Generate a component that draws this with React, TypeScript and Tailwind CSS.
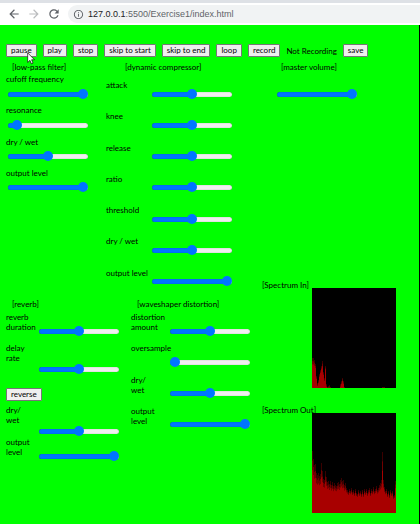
import type { CSSProperties, ReactNode } from "react";
import { MdArrowBack, MdArrowForward, MdInfoOutline, MdRefresh } from "react-icons/md";

function Slider({ id, label, value }: { id: string; label?: string; value: number }) {
  return (
    <input
      id={id}
      type="range"
      min={0}
      max={100}
      defaultValue={value}
      aria-label={label}
      style={{ "--fill": `calc(5px + (100% - 10px) * ${value / 100})` } as CSSProperties}
      className="block h-[10px] w-20 shrink-0 appearance-none bg-transparent [&::-webkit-slider-runnable-track]:h-[5px] [&::-webkit-slider-runnable-track]:rounded-full [&::-webkit-slider-runnable-track]:bg-[linear-gradient(to_right,#0075ff_var(--fill),#efefef_var(--fill))] [&::-webkit-slider-runnable-track]:shadow-[inset_0_0_1px_rgba(0,0,0,0.5)] [&::-webkit-slider-thumb]:-mt-[3px] [&::-webkit-slider-thumb]:size-[10px] [&::-webkit-slider-thumb]:appearance-none [&::-webkit-slider-thumb]:rounded-full [&::-webkit-slider-thumb]:bg-[#0075ff]"
    />
  );
}

function Button({ children }: { children: ReactNode }) {
  return (
    <button
      type="button"
      className="h-[13px] shrink-0 whitespace-nowrap rounded-[1px] border border-[#767676] bg-[#efefef] px-1 text-[8px] leading-[11px] text-black"
    >
      {children}
    </button>
  );
}

function Heading({ children }: { children: ReactNode }) {
  return <h2 className="h-3 whitespace-nowrap">{children}</h2>;
}

const filter = [
  { id: "lp-cutoff", label: "cufoff frequency", value: 100 },
  { id: "lp-resonance", label: "resonance", value: 5 },
  { id: "lp-mix", label: "dry / wet", value: 50 },
  { id: "lp-level", label: "output level", value: 100 },
];

const compressor = [
  { id: "dc-attack", label: "attack", value: 50 },
  { id: "dc-knee", label: "knee", value: 50 },
  { id: "dc-release", label: "release", value: 50 },
  { id: "dc-ratio", label: "ratio", value: 50 },
  { id: "dc-threshold", label: "threshold", value: 50 },
  { id: "dc-mix", label: "dry / wet", value: 50 },
  { id: "dc-level", label: "output level", value: 100 },
];

const distortion = [
  { id: "ws-amount", label: "distortion\namount", value: 50 },
  { id: "ws-oversample", label: "oversample", value: 0 },
  { id: "ws-mix", label: "dry/\nwet", value: 50 },
  { id: "ws-level", label: "output\nlevel", value: 100 },
];

function ReverbRow({ id, label, value, tall }: { id: string; label: string; value: number; tall?: boolean }) {
  return (
    <div className={tall ? "flex h-[31px] items-end" : "flex h-6 items-end"}>
      <label htmlFor={id} className="w-[33px] self-start whitespace-pre">
        {label}
      </label>
      <Slider id={id} value={value} />
    </div>
  );
}

const spectrumIn = [
  30, 30, 28, 24, 12, 5, 8, 14, 18, 22, 27, 16, 10, 22, 4, 1, 2, 3, 1, 0, 0, 0, 0, 0, 0, 0, 0, 0, 4, 7, 10, 7, 1, 0,
  0, 0, 0, 0, 0, 0, 0, 0, 0, 0, 0, 0, 0, 0, 0, 0, 0, 0, 0, 0, 0, 0, 0, 0, 0, 0, 0, 0, 0, 0, 0, 0, 0, 0, 0, 0, 1, 1,
  1, 0, 0, 0, 0, 0, 0, 0, 0, 0, 0, 0,
];

const spectrumOut = [
  62, 54, 48, 49, 40, 38, 40, 37, 39, 50, 42, 34, 33, 42, 36, 31, 32, 29, 32, 28, 31, 27, 30, 28, 27, 30, 31, 29, 33,
  35, 32, 33, 28, 30, 25, 23, 21, 24, 22, 25, 21, 23, 20, 24, 20, 19, 23, 20, 22, 19, 23, 19, 24, 21, 24, 20, 23, 25,
  20, 24, 22, 26, 22, 24, 27, 23, 25, 28, 30, 33, 61, 33, 26, 22, 24, 19, 22, 18, 23, 20, 22, 17, 18, 32,
];

function Spectrum({ bins, name }: { bins: number[]; name: string }) {
  return (
    <svg role="img" aria-label={name} viewBox="0 0 84 100" className="mt-2 block h-[100px] w-[84px] shrink-0 bg-black">
      {bins.map((h, i) => {
        const core = Math.max(0, Math.min(h - 3, 20 + (h - 24) * 0.6));
        return (
          <g key={i} fill="#a80000">
            <rect x={i} y={100 - h} width="1" height={h} opacity="0.35" />
            <rect x={i} y={100 - (h + core) / 2} width="1" height={(h + core) / 2} opacity="0.5" />
            <rect x={i} y={100 - core} width="1" height={core} />
          </g>
        );
      })}
    </svg>
  );
}

export default function App() {
  return (
    <div className="flex min-h-screen flex-col font-[Lato,sans-serif] text-[8px] leading-[10px] text-black">
      <header className="flex h-[25px] items-center border-t-3 border-[#dee1e6] bg-white pl-[7px] text-[#5f6368]">
        <nav className="flex gap-[6px]">
          <button type="button" aria-label="Back">
            <MdArrowBack size={14} />
          </button>
          <button type="button" aria-label="Forward" className="text-[#babcbe]">
            <MdArrowForward size={14} />
          </button>
          <button type="button" aria-label="Reload">
            <MdRefresh size={14} />
          </button>
        </nav>
        <div className="ml-[7px] flex h-[18px] flex-1 items-center gap-1 rounded-l-full bg-[#f1f3f4] pl-[5px]">
          <MdInfoOutline size={11} />
          <p className="whitespace-nowrap font-['Liberation_Sans',sans-serif] text-[9px]">
            <span className="text-[#202124]">127.0.0.1</span>:5500/Exercise1/index.html
          </p>
        </div>
      </header>

      <main className="relative flex-1 border-r border-black bg-[#00ff00] pl-[6px] pt-[19px]">
        <div className="flex items-center gap-[6px]">
          <Button>pause</Button>
          <Button>play</Button>
          <Button>stop</Button>
          <Button>skip to start</Button>
          <Button>skip to end</Button>
          <Button>loop</Button>
          <Button>record</Button>
          <span className="whitespace-nowrap">Not Recording</span>
          <Button>save</Button>
        </div>

        <div className="flex pt-[5px]">
          <div className="w-64 shrink-0">
            <div className="flex">
              <section className="w-[100px]">
                <div className="pl-[6px]">
                  <Heading>[low-pass filter]</Heading>
                </div>
                <div className="grid h-[125px] grid-rows-4">
                  {filter.map((p) => (
                    <div key={p.id}>
                      <label htmlFor={p.id} className="block">
                        {p.label}
                      </label>
                      <div className="pl-[2px] pt-[5px]">
                        <Slider id={p.id} value={p.value} />
                      </div>
                    </div>
                  ))}
                </div>
              </section>
              <section className="flex-1">
                <div className="pl-[19px]">
                  <Heading>[dynamic compressor]</Heading>
                </div>
                <div className="mt-[6px] grid h-[219px] grid-rows-7">
                  {compressor.map((p) => (
                    <div key={p.id} className="flex">
                      <label htmlFor={p.id} className="w-[46px] whitespace-nowrap">
                        {p.label}
                      </label>
                      <div className="pt-[9px]">
                        <Slider id={p.id} value={p.value} />
                      </div>
                    </div>
                  ))}
                </div>
              </section>
            </div>

            <div className="flex">
              <section className="w-[125px]">
                <div className="pl-[6px]">
                  <Heading>[reverb]</Heading>
                </div>
                <div className="flex flex-col items-start pt-[1px]">
                  <ReverbRow id="rv-duration" label={"reverb\nduration"} value={50} />
                  <div className="pb-[14px] pt-[7px]">
                    <ReverbRow id="rv-delay" label={"delay\nrate"} value={50} tall />
                  </div>
                  <Button>reverse</Button>
                  <div className="pt-[4px]">
                    <ReverbRow id="rv-mix" label={"dry/\nwet"} value={50} tall />
                  </div>
                  <div className="pt-[1px]">
                    <ReverbRow id="rv-level" label={"output\nlevel"} value={100} />
                  </div>
                </div>
              </section>
              <section className="flex-1">
                <div className="pl-[6px]">
                  <Heading>[waveshaper distortion]</Heading>
                </div>
                <div className="grid h-[126px] grid-rows-4 pt-[1px]">
                  {distortion.map((p) => (
                    <div key={p.id} className="flex">
                      <label htmlFor={p.id} className="w-[39px] whitespace-pre">
                        {p.label}
                      </label>
                      <div className="pt-[14px]">
                        <Slider id={p.id} value={p.value} />
                      </div>
                    </div>
                  ))}
                </div>
              </section>
            </div>
          </div>

          <div className="flex-1">
            <div className="pl-[19px]">
              <Heading>[master volume]</Heading>
            </div>
            <div className="pl-[15px] pt-[15px]">
              <Slider id="master" label="master volume" value={100} />
            </div>
            <div className="flex pt-[181px]">
              <h2 className="w-[50px] whitespace-nowrap">[Spectrum In]</h2>
              <Spectrum bins={spectrumIn} name="Input spectrum" />
            </div>
            <div className="flex pb-[10px] pt-[17px]">
              <h2 className="relative z-10 w-[50px] whitespace-nowrap">[Spectrum Out]</h2>
              <Spectrum bins={spectrumOut} name="Output spectrum" />
            </div>
          </div>
        </div>

        <svg viewBox="0 0 12 19" className="absolute left-[27px] top-[27px] h-[13px] w-2" aria-hidden="true">
          <path
            d="M1 1v14.5l3.4-3.2 2.2 5.2 2.5-1.1-2.2-5h4.4z"
            fill="#fff"
            stroke="#000"
            strokeWidth="1"
            strokeLinejoin="round"
          />
        </svg>
      </main>
    </div>
  );
}
